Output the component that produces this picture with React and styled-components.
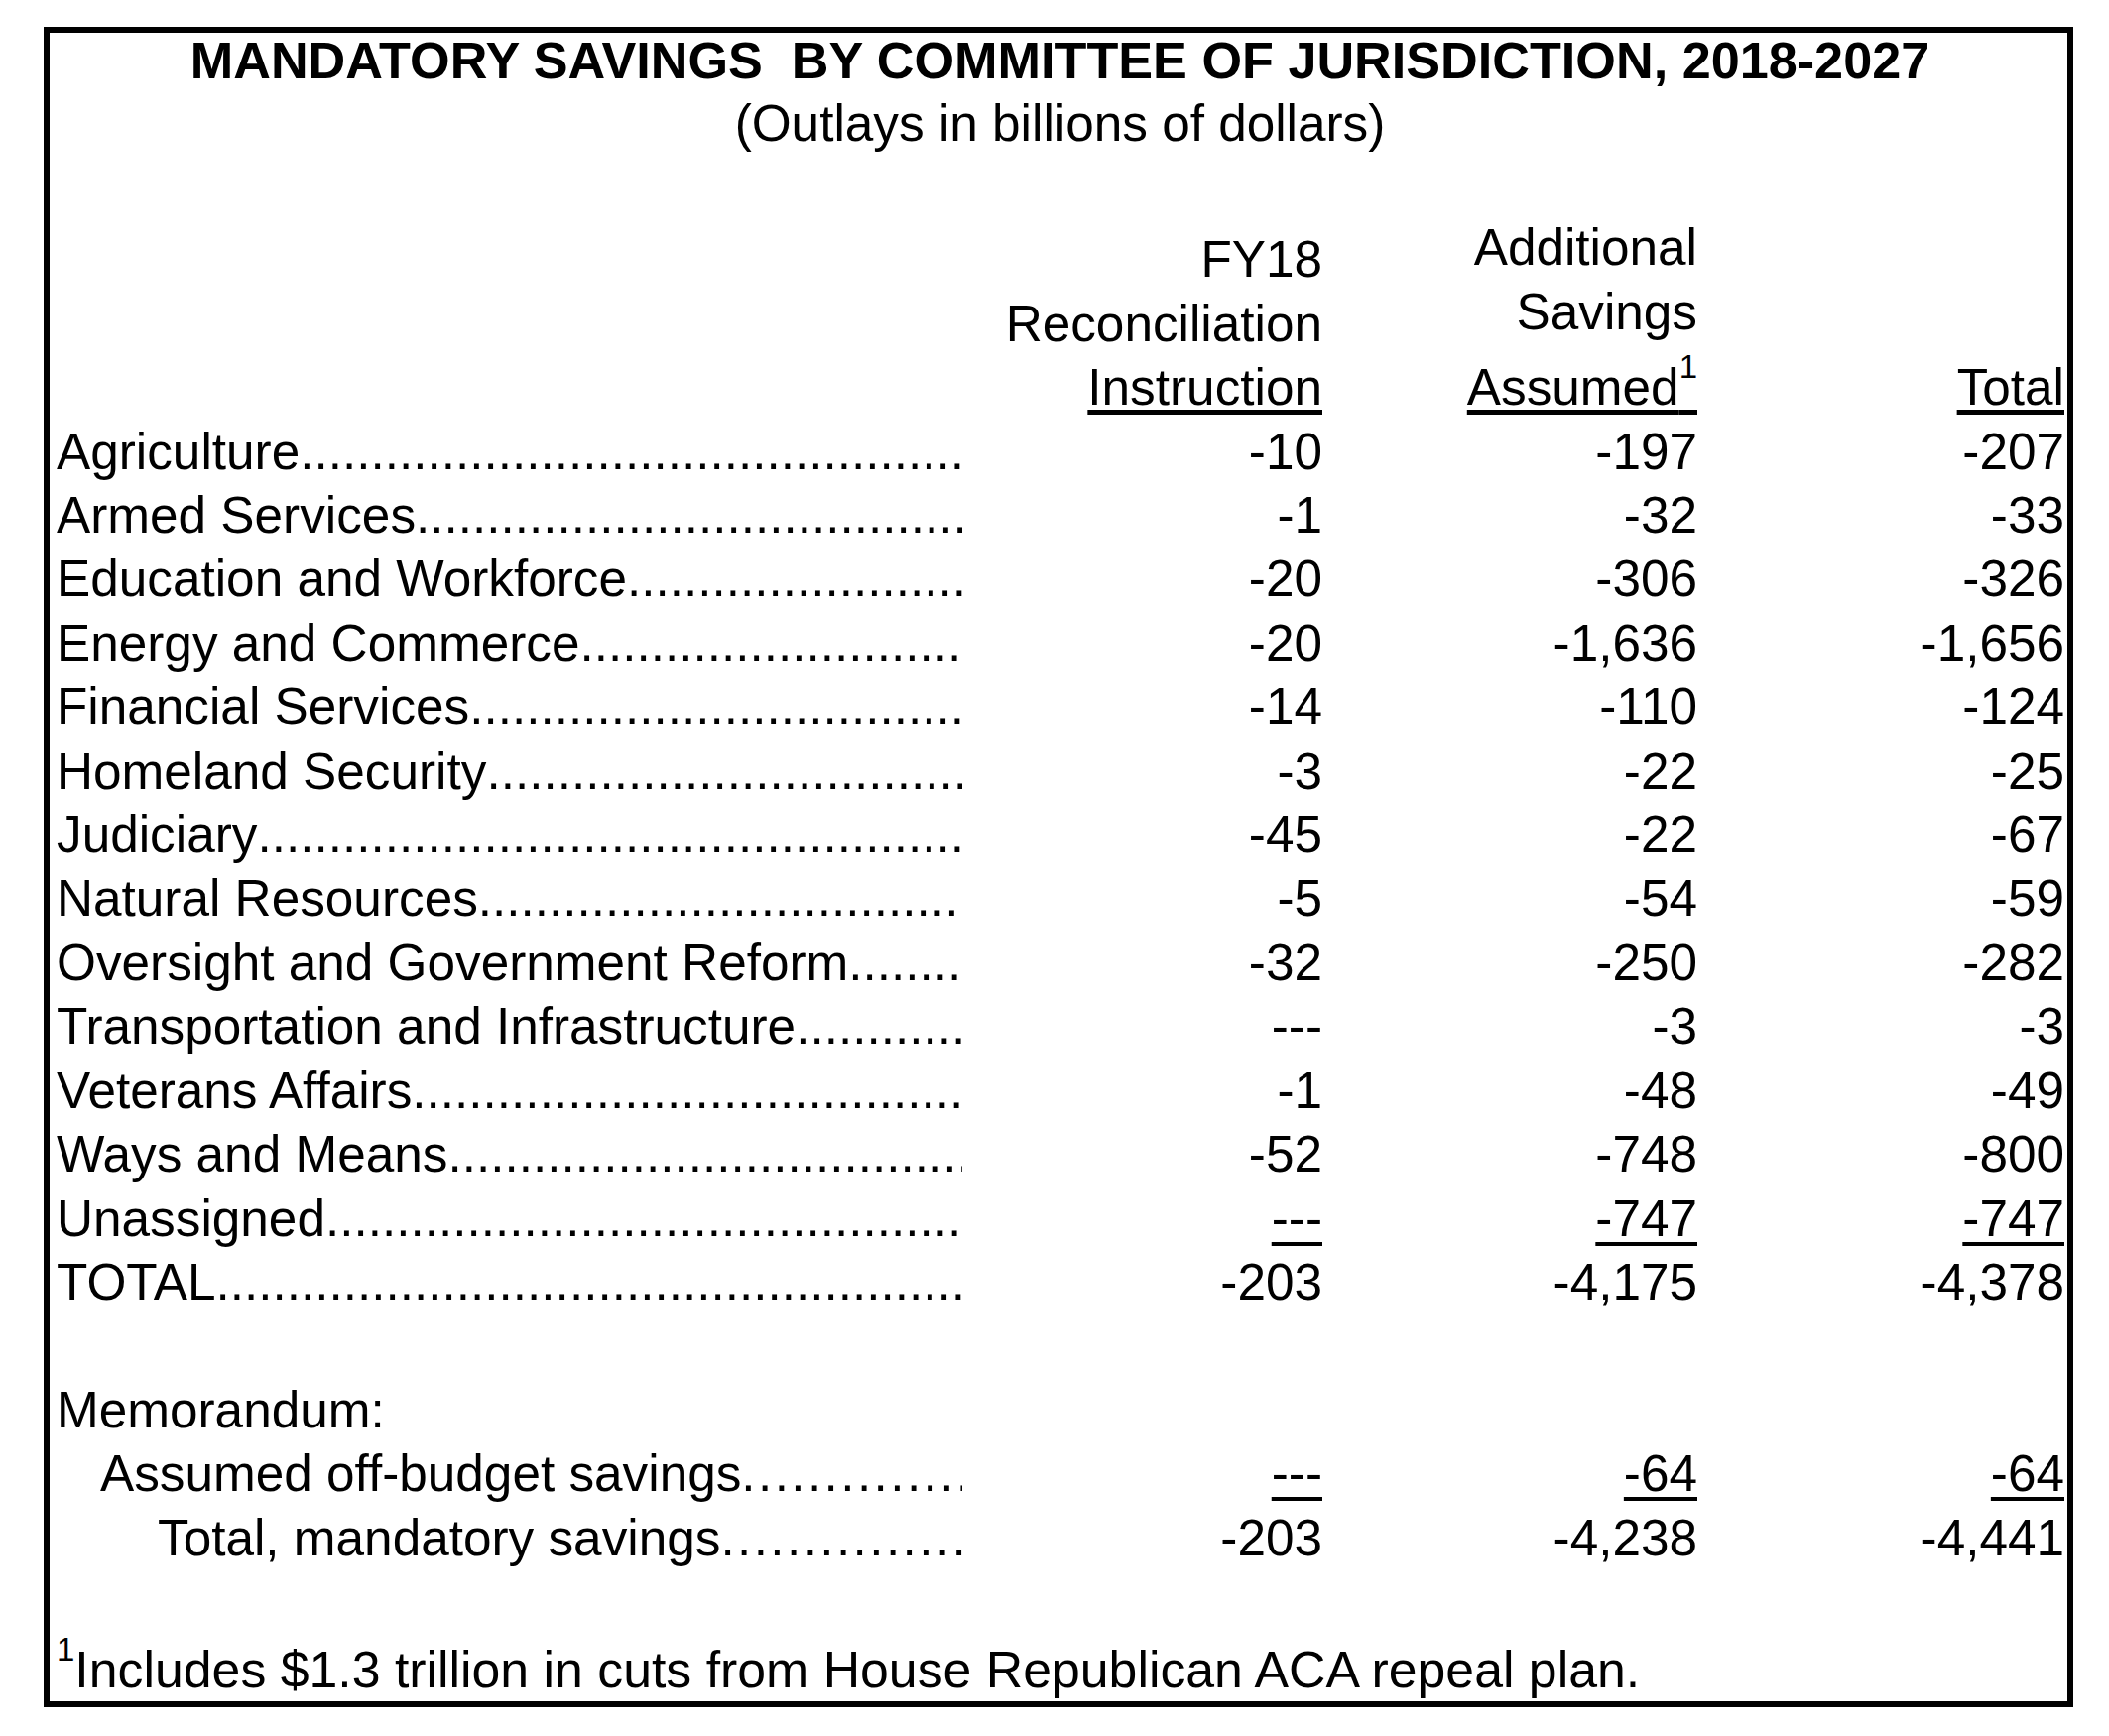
import React from 'react';
import styled, { createGlobalStyle } from 'styled-components';

const Global = createGlobalStyle`
  html, body { margin: 0; padding: 0; background: #fff; }
  body { font-family: "Liberation Sans", Arial, sans-serif; color: #000; }
`;

const Page = styled.div`
  padding: 27px 0 0 44px;
`;

const Frame = styled.div`
  box-sizing: border-box;
  width: 2046px;
  border: 6px solid #000;
  padding: 0 4px 0 7px;
  font-size: 51.3px;
  line-height: 64.4px;
`;

const Title = styled.h1`
  margin: 0;
  font-size: 52.2px;
  font-weight: 700;
  line-height: 56px;
  text-align: center;
  white-space: pre;
`;

const Subtitle = styled.div`
  margin-top: 4px;
  text-align: center;
  line-height: 64.4px;
`;

const Row = styled.div`
  display: grid;
  grid-template-columns: 913px 363px 378px 370px;
  line-height: 64.4px;
  white-space: nowrap;
`;

const HeaderRow = styled(Row)`
  margin-top: 61px;
  align-items: end;
`;

const HeadCell = styled.div`
  grid-column: ${p => p.$col};
  text-align: right;
`;

const HeadLine = styled.div`
  padding-top: ${p => (p.$raised ? '12px' : '0')};
`;

const Label = styled.div`
  display: flex;
  overflow: hidden;
  padding-left: ${p => p.$indent || 0}px;
`;

const Leader = styled.span`
  flex: 1;
  min-width: 0;
  overflow: hidden;
  letter-spacing: ${p => (p.$wide ? '2.4px' : '0')};
`;

const Num = styled.div`
  text-align: right;
`;

const Under = styled.span`
  text-decoration: underline;
  text-decoration-thickness: ${p => (p.$thick ? '5px' : '4px')};
  text-underline-offset: ${p => (p.$thick ? '5px' : '6px')};
`;

const Sup = styled.sup`
  font-size: 33px;
  line-height: 0;
  vertical-align: 27px;
`;

const Spacer = styled.div`
  height: 64.4px;
`;

const Footnote = styled.div`
  margin-top: 68px;
  font-size: 51.8px;
  line-height: 64.4px;
  white-space: nowrap;
`;

const rows = [
  ['Agriculture', '-10', '-197', '-207'],
  ['Armed Services', '-1', '-32', '-33'],
  ['Education and Workforce', '-20', '-306', '-326'],
  ['Energy and Commerce', '-20', '-1,636', '-1,656'],
  ['Financial Services', '-14', '-110', '-124'],
  ['Homeland Security', '-3', '-22', '-25'],
  ['Judiciary', '-45', '-22', '-67'],
  ['Natural Resources', '-5', '-54', '-59'],
  ['Oversight and Government Reform', '-32', '-250', '-282'],
  ['Transportation and Infrastructure', '---', '-3', '-3'],
  ['Veterans Affairs', '-1', '-48', '-49'],
  ['Ways and Means', '-52', '-748', '-800'],
  ['Unassigned', '---', '-747', '-747', true],
  ['TOTAL', '-203', '-4,175', '-4,378'],
];

const DOTS = '.'.repeat(120);

function DataRow({ label, values, underline, indent, wide }) {
  return (
    <Row>
      <Label $indent={indent}>
        <span>{label}</span>
        <Leader $wide={wide}>{DOTS}</Leader>
      </Label>
      {values.map((v, i) => (
        <Num key={i}>{underline ? <Under>{v}</Under> : v}</Num>
      ))}
    </Row>
  );
}

export default function App() {
  return (
    <>
      <Global />
      <Page>
        <Frame>
          <Title>{'MANDATORY SAVINGS  BY COMMITTEE OF JURISDICTION, 2018-2027'}</Title>
          <Subtitle>(Outlays in billions of dollars)</Subtitle>
          <HeaderRow>
            <HeadCell $col={2}>
              <HeadLine>FY18</HeadLine>
              <HeadLine>Reconciliation</HeadLine>
              <HeadLine><Under $thick>Instruction</Under></HeadLine>
            </HeadCell>
            <HeadCell $col={3}>
              <HeadLine>Additional</HeadLine>
              <HeadLine>Savings</HeadLine>
              <HeadLine $raised><Under $thick>Assumed<Sup>1</Sup></Under></HeadLine>
            </HeadCell>
            <HeadCell $col={4}>
              <HeadLine><Under $thick>Total</Under></HeadLine>
            </HeadCell>
          </HeaderRow>
          {rows.map(([label, a, b, c, u]) => (
            <DataRow key={label} label={label} values={[a, b, c]} underline={u} />
          ))}
          <Spacer />
          <Row>
            <Label>Memorandum:</Label>
          </Row>
          <DataRow
            label="Assumed off-budget savings"
            values={['---', '-64', '-64']}
            underline
            indent={44}
            wide
          />
          <DataRow
            label="Total, mandatory savings"
            values={['-203', '-4,238', '-4,441']}
            indent={102}
            wide
          />
          <Footnote>
            <Sup>1</Sup>Includes $1.3 trillion in cuts from House Republican ACA repeal plan.
          </Footnote>
        </Frame>
      </Page>
    </>
  );
}
